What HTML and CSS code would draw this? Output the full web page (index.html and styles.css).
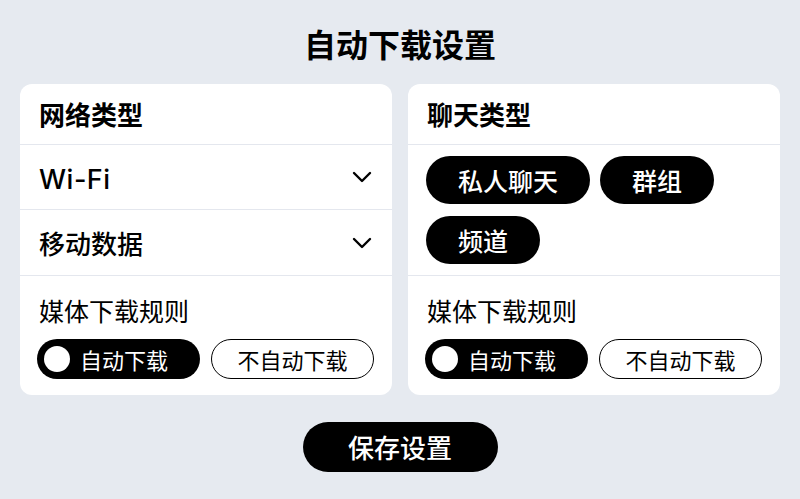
FILE: index.html
```html
<!DOCTYPE html>
<html lang="zh-CN">
<head>
<meta charset="utf-8">
<title>自动下载设置</title>
<link rel="stylesheet" href="styles.css">
</head>
<body>
<div class="page">
  <h1 class="title">自动下载设置</h1>
  <div class="cards">
    <section class="card">
      <div class="card-head">网络类型</div>
      <div class="mid">
        <div class="row">
          <span class="latin">Wi-Fi</span>
          <svg class="chev" width="20" height="12" viewBox="0 0 20 12"><polyline points="2,2 10,10 18,2" fill="none" stroke="#000" stroke-width="2.4" stroke-linecap="round" stroke-linejoin="round"/></svg>
        </div>
        <div class="row row-last">
          <span>移动数据</span>
          <svg class="chev" width="20" height="12" viewBox="0 0 20 12"><polyline points="2,2 10,10 18,2" fill="none" stroke="#000" stroke-width="2.4" stroke-linecap="round" stroke-linejoin="round"/></svg>
        </div>
      </div>
      <div class="media">
        <div class="media-title">媒体下载规则</div>
        <div class="pills">
          <div class="pill pill-on"><span class="dot"></span><span>自动下载</span></div>
          <div class="pill pill-off">不自动下载</div>
        </div>
      </div>
    </section>
    <section class="card">
      <div class="card-head">聊天类型</div>
      <div class="mid chips">
        <span class="chip">私人聊天</span>
        <span class="chip">群组</span>
        <span class="chip">频道</span>
      </div>
      <div class="media">
        <div class="media-title">媒体下载规则</div>
        <div class="pills">
          <div class="pill pill-on"><span class="dot"></span><span>自动下载</span></div>
          <div class="pill pill-off">不自动下载</div>
        </div>
      </div>
    </section>
  </div>
  <div class="save-wrap"><button class="save">保存设置</button></div>
</div>
</body>
</html>
```

FILE: styles.css
```css
* { box-sizing: border-box; }
html, body { margin: 0; padding: 0; }
body {
  background: #e6eaf0;
  font-family: "Noto Sans CJK SC", "Noto Sans", sans-serif;
  color: #000;
  width: 800px;
  height: 499px;
  overflow: hidden;
}
.page { padding-top: 21px; }
.title {
  margin: 0 0 19px;
  height: 44px;
  line-height: 44px;
  font-size: 32px;
  font-weight: 700;
  text-align: center;
}
.cards {
  display: grid;
  grid-template-columns: 1fr 1fr;
  gap: 16px;
  padding: 0 20px;
}
.card {
  background: #fff;
  border-radius: 12px;
  height: 311px;
  display: flex;
  flex-direction: column;
}
.card-head {
  height: 61px;
  padding: 0 19px;
  display: flex;
  align-items: center;
  font-size: 26px;
  font-weight: 600;
  line-height: 30px;
  border-bottom: 1px solid #e4e7ee;
}
.mid {
  height: 131px;
  border-bottom: 1px solid #e4e7ee;
}
.row {
  height: 65px;
  display: flex;
  align-items: center;
  justify-content: space-between;
  padding: 0 20px 0 19px;
  font-size: 26px;
  font-weight: 500;
  line-height: 30px;
  border-bottom: 1px solid #e4e7ee;
}
.row-last { border-bottom: none; }
.latin {
  font-family: "Inter", "Noto Sans", sans-serif;
  font-size: 27px;
  font-weight: 500;
  letter-spacing: 0.5px;
  margin-top: 5px;
}
.chev { display: block; }
.chips {
  display: flex;
  flex-wrap: wrap;
  align-content: flex-start;
  gap: 12px 10px;
  padding: 11px 18px 0;
}
.chip {
  height: 48px;
  padding: 0 32px;
  border-radius: 24px;
  background: #000;
  color: #fff;
  font-size: 25px;
  font-weight: 500;
  line-height: 48px;
  display: inline-flex;
  align-items: center;
}
.media {
  flex: 1;
  padding: 19px 17px 0 19px;
}
.media-title {
  font-size: 25px;
  line-height: 30px;
  font-weight: 400;
}
.pills {
  display: flex;
  gap: 11px;
  margin-top: 14px;
  margin-left: -2px;
}
.pill {
  width: 163px;
  height: 40px;
  border-radius: 20px;
  font-size: 22px;
  line-height: 26px;
  display: flex;
  align-items: center;
}
.pill-on {
  background: #000;
  color: #fff;
  padding-left: 7px;
  gap: 10px;
}
.dot {
  width: 26px;
  height: 26px;
  border-radius: 50%;
  background: #fff;
  flex: none;
}
.pill-off {
  border: 1.5px solid #000;
  background: #fff;
  justify-content: center;
}
.save-wrap {
  display: flex;
  justify-content: center;
  margin-top: 27px;
}
.save {
  width: 195px;
  height: 50px;
  border-radius: 25px;
  border: none;
  background: #000;
  color: #fff;
  font-family: "Noto Sans CJK SC", "Noto Sans", sans-serif;
  font-size: 26px;
  font-weight: 500;
  line-height: 30px;
  padding: 0;
}
```
